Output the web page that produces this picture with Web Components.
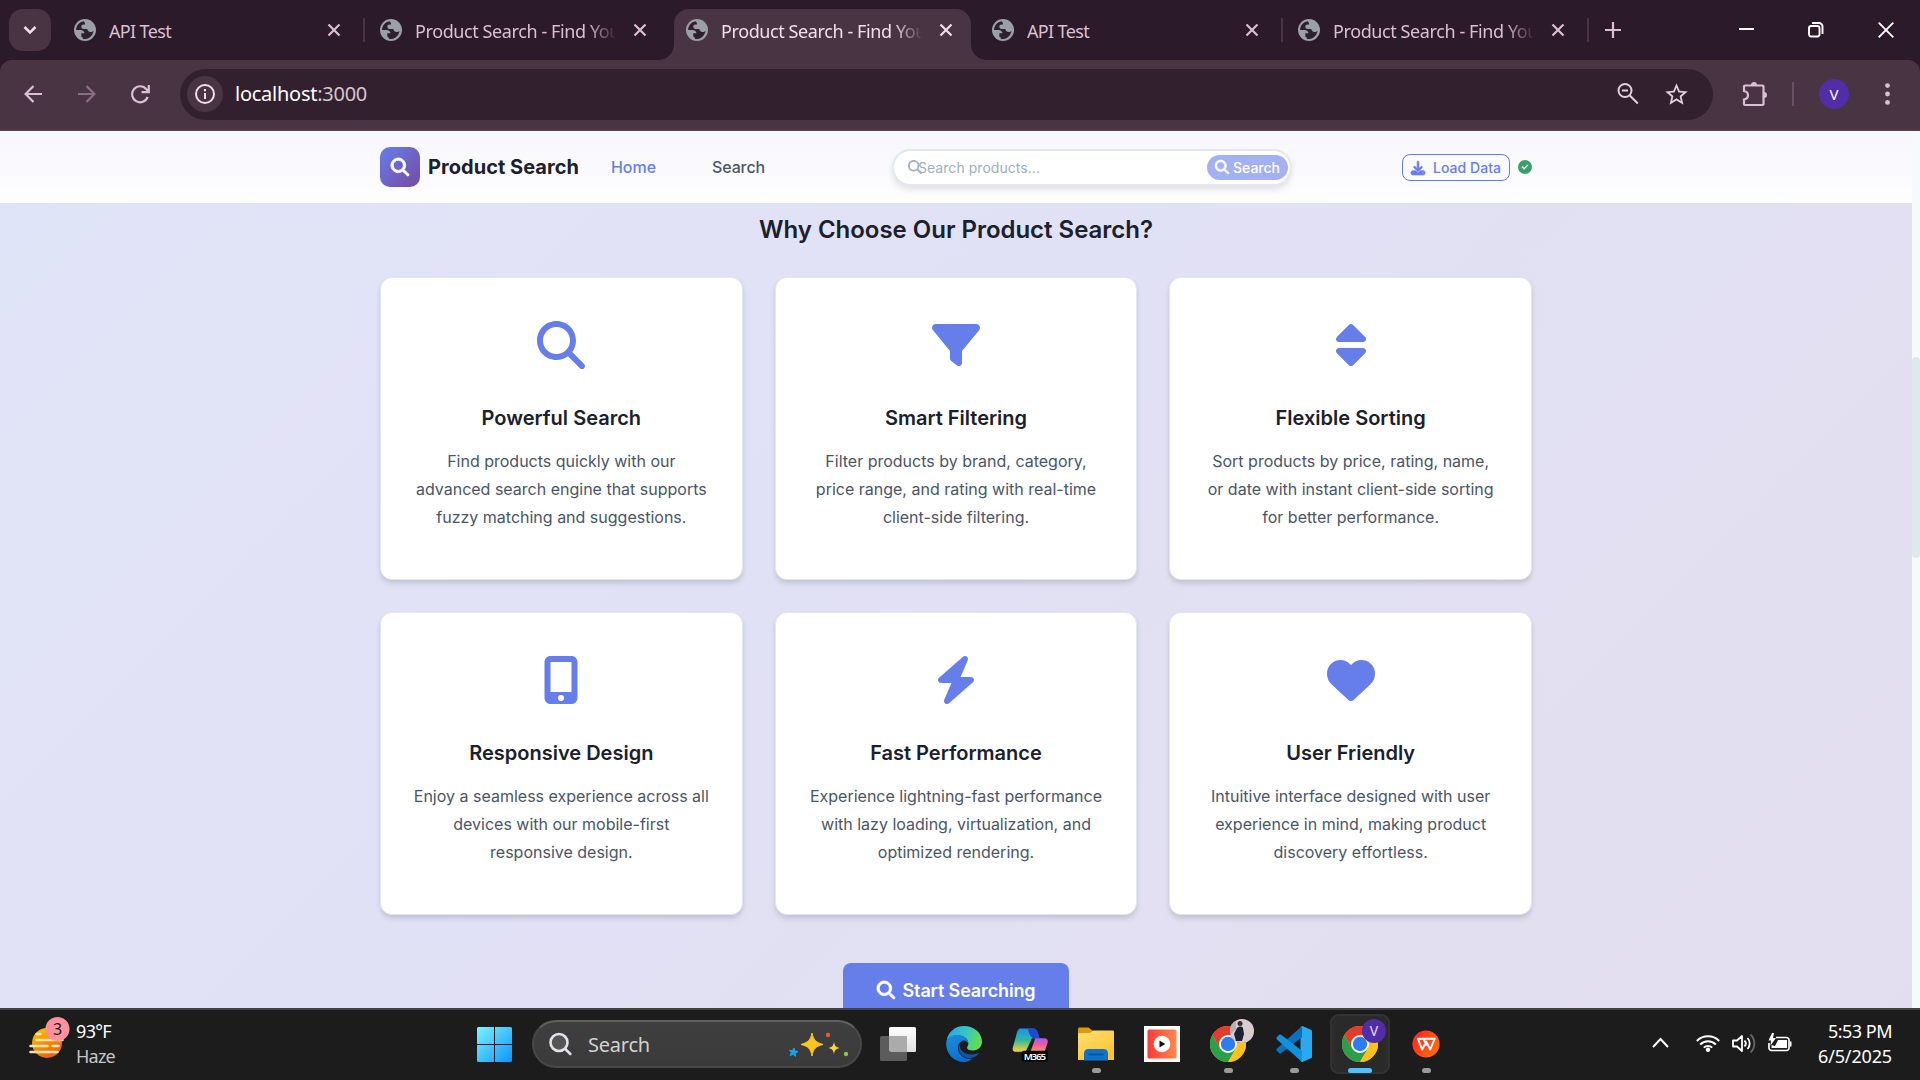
<!DOCTYPE html>
<html lang="en">
<head>
<meta charset="utf-8">
<title>Product Search</title>
<style>
html,body{margin:0;width:1920px;height:1080px;overflow:hidden;background:#1c1c1c}
body{font-family:Inter,"Liberation Sans",sans-serif}
</style>
</head>
<body>
<desktop-screen></desktop-screen>
<script>
const UI = '"Noto Sans","Open Sans",sans-serif';
const define = (name, html, after) => {
  const tpl = document.createElement('template');
  customElements.define(name, class extends HTMLElement {
    constructor() {
      super();
      tpl.innerHTML = typeof html === 'function' ? html(this) : html;
      this.attachShadow({ mode: 'open' }).appendChild(tpl.content.cloneNode(true));
    }
    connectedCallback() { if (after) after(this); }
  });
};

/* Text set to an exact advance width by adjusting its tracking. */
define('fit-text', '<style>:host{display:inline-block;white-space:nowrap}span{display:inline-block}</style><span><slot></slot></span>', el => {
  const span = el.shadowRoot.querySelector('span');
  const n = el.textContent.length, w = +el.getAttribute('w');
  const d = (w - span.getBoundingClientRect().width) / n;
  span.style.letterSpacing = d.toFixed(3) + 'px';
});

const FA = {
  search: [512, 'M416 208c0 45.9-14.9 88.3-40 122.7L502.6 457.4c12.5 12.5 12.5 32.8 0 45.3s-32.8 12.5-45.3 0L330.7 376c-34.4 25.2-76.8 40-122.7 40C93.1 416 0 322.9 0 208S93.1 0 208 0S416 93.1 416 208zM208 352a144 144 0 1 0 0-288 144 144 0 1 0 0 288z'],
  filter: [512, 'M3.9 54.9C10.5 40.9 24.5 32 40 32H472c15.5 0 29.5 8.9 36.1 22.9s4.6 30.5-5.2 42.5L320 320.9V448c0 12.1-6.8 23.2-17.7 28.6s-23.8 4.3-33.5-3l-64-48c-8.1-6-12.8-15.5-12.8-25.6V320.9L9 97.3C-.7 85.4-2.8 68.8 3.9 54.9z'],
  sort: [320, 'M137.4 41.4c12.5-12.5 32.8-12.5 45.3 0l128 128c9.2 9.2 11.9 22.9 6.9 34.9s-16.6 19.8-29.6 19.8H32c-12.9 0-24.6-7.8-29.6-19.8s-2.2-25.7 6.9-34.9l128-128zm0 429.3l-128-128c-9.2-9.2-11.9-22.9-6.9-34.9s16.6-19.8 29.6-19.8H288c12.9 0 24.6 7.8 29.6 19.8s2.2 25.7-6.9 34.9l-128 128c-12.5 12.5-32.8 12.5-45.3 0z'],
  mobile: [384, 'M16 64C16 28.7 44.7 0 80 0H304c35.3 0 64 28.7 64 64V448c0 35.3-28.7 64-64 64H80c-35.3 0-64-28.7-64-64V64zM224 448a32 32 0 1 0-64 0 32 32 0 1 0 64 0zM304 64H80V384H304V64z'],
  bolt: [448, 'M349.4 44.6c5.9-13.7 1.5-29.7-10.6-38.5s-28.6-8-39.9 1.8l-256 224c-10 8.8-13.6 22.9-8.9 35.3S50.7 288 64 288H175.5L98.6 467.4c-5.9 13.7-1.5 29.7 10.6 38.5s28.6 8 39.9-1.8l256-224c10-8.8 13.6-22.9 8.9-35.3s-16.6-20.7-30-20.7H272.5L349.4 44.6z'],
  heart: [512, 'M47.6 300.4L228.3 469.1c7.5 7 17.4 10.9 27.7 10.9s20.2-3.9 27.7-10.9L464.4 300.4c30.4-28.3 47.6-68 47.6-109.5v-5.8c0-69.9-50.5-129.5-119.4-141C347 36.5 300.6 51.4 268 84L256 96 244 84c-32.6-32.6-79-47.5-124.6-39.9C50.5 55.6 0 115.2 0 185.1v5.8c0 41.5 17.2 81.2 47.6 109.5z'],
  download: [512, 'M288 32c0-17.7-14.3-32-32-32s-32 14.3-32 32V274.7l-73.4-73.4c-12.5-12.5-32.8-12.5-45.3 0s-12.5 32.8 0 45.3l128 128c12.5 12.5 32.8 12.5 45.3 0l128-128c12.5-12.5 12.5-32.8 0-45.3s-32.8-12.5-45.3 0L288 274.7V32zM64 352c-35.3 0-64 28.7-64 64v32c0 35.3 28.7 64 64 64H448c35.3 0 64-28.7 64-64V416c0-35.3-28.7-64-64-64H346.5l-45.3 45.3c-25 25-65.5 25-90.5 0L165.5 352H64zm368 56a24 24 0 1 1 0 48 24 24 0 1 1 0-48z'],
  check: [512, 'M256 512A256 256 0 1 0 256 0a256 256 0 1 0 0 512zM369 209L241 337c-9.4 9.4-24.6 9.4-33.9 0l-64-64c-9.4-9.4-9.4-24.6 0-33.9s24.6-9.4 33.9 0l47 47L335 175c9.4-9.4 24.6-9.4 33.9 0s9.4 24.6 0 33.9z']
};
define('fa-icon', '<style>:host{display:block;flex:none}svg{display:block;margin:auto;overflow:visible}:host([bold]) path{stroke:currentColor;stroke-width:24px}</style><svg fill="currentColor"><path/></svg>', el => {
  const [w, d] = FA[el.getAttribute('name')], s = +el.getAttribute('size');
  const svg = el.shadowRoot.querySelector('svg');
  svg.setAttribute('viewBox', `0 0 ${w} 512`);
  svg.setAttribute('height', s);
  svg.setAttribute('width', s * w / 512);
  svg.firstChild.setAttribute('d', d);
});

/* ---------- browser chrome ---------- */
define('browser-tab', `<style>
:host{display:flex;align-items:center;box-sizing:border-box;width:306px;height:51px;margin-top:9px;padding:0 0 9px 12px;color:#dcbfd3;position:relative;font:400 18px ${UI};flex:none}
:host([active]){background:#493443;border-radius:15px 15px 0 0;width:297px;margin-right:9px;color:#f0dfea}
:host([active])::before,:host([active])::after{content:"";position:absolute;bottom:0;width:15px;height:15px}
:host([active])::before{left:-15px;background:radial-gradient(circle at 0 0,transparent 14.5px,#493443 15px)}
:host([active])::after{right:-15px;background:radial-gradient(circle at 100% 0,transparent 14.5px,#493443 15px)}
.globe{width:22px;height:22px;flex:none}
.t{margin-left:13px;width:200px;overflow:hidden;white-space:nowrap;line-height:26px;padding-top:2px}
:host([long]) .t{-webkit-mask-image:linear-gradient(90deg,#000 172px,transparent 202px)}
.x{margin-left:18px;width:14px;height:14px;flex:none}
i{position:absolute;left:301px;top:9px;width:2px;height:24px;background:#493443}
:host(:not([sep])) i{display:none}
</style>
<svg class="globe" viewBox="0 0 22 22"><circle cx="11" cy="11" r="11" fill="#9aa0a6"/><path d="M9.6 2.2C5.2 2.9 2.1 6.7 2.1 11h4.6c2 0 3.6 1.4 3.8 3.2H7.300v2.500c0 1 .6 1.700 1.500 1.800v1.200c4 .9 7.700-1 9.500-4.300.8-1.400 1.100-2.600 1.100-3.600-1 1.300-2.600 1.500-4 .9-1.300-.6-2-1.600-2.100-2.800H9.500c-1.300 0-2.200-.9-2.200-2.100 0-1.300 1-2.200 2.300-2.200h1.500c0-1.300-.4-2.600-1.500-3.400z" fill="#2f2030"/></svg>
<div class="t"><slot></slot></div>
<svg class="x" viewBox="0 0 14 14" stroke="currentColor" stroke-width="2.200"><path d="M1.500 1.500l11 11M12.500 1.500l-11 11"/></svg><i></i>`);

define('browser-chrome', `<style>
:host{display:flex;flex-direction:column;height:131px;background:#2b1a29;color:#dcbfd3}
.strip{display:flex;height:60px}
.drop{width:42px;height:42px;margin:9px 11px 0 9px;border-radius:14px;background:#493443;display:flex;align-items:center;justify-content:center}
.plus{margin:22px 0 0 13px;width:16px;height:16px}
.win{display:flex;gap:54px;margin-left:auto;padding:22px 26px 0 0}
.bar{display:flex;align-items:center;height:69px;background:#493443;border-radius:12px 12px 0 0;padding:0 26px 1px 24px;box-sizing:border-box;border-bottom:0}
.line{height:2px;background:#51404b}
.bar>svg{flex:none}
.omni{display:flex;align-items:center;box-sizing:border-box;width:1533px;height:51px;margin-left:29px;border-radius:26px;background:#33202f;padding:0 23px 0 7px;flex:none}
.info{width:36px;height:36px;border-radius:50%;background:#493443;display:flex;align-items:center;justify-content:center;color:#f0dfea}
.url{margin-left:12px;font:400 20px/28px ${UI};color:#d6c5cf}
.url b{font-weight:400;color:#fff}
.sep{width:2px;height:24px;background:#6b5063;margin:0 25px}
.av{width:30px;height:30px;border-radius:50%;background:#512da8;color:#fff;font:400 15px/30px ${UI};text-align:center;margin-right:36px}
</style>
<div class="strip">
 <div class="drop"><svg width="14" height="10" viewBox="0 0 14 10" fill="none" stroke="#f0dfea" stroke-width="2.500"><path d="M1.500 2l5.500 5.500L12.500 2"/></svg></div>
 <browser-tab sep><fit-text w="62">API Test</fit-text></browser-tab>
 <browser-tab long><fit-text w="212">Product Search - Find Your</fit-text></browser-tab>
 <browser-tab long active><fit-text w="212">Product Search - Find Your</fit-text></browser-tab>
 <browser-tab sep><fit-text w="62">API Test</fit-text></browser-tab>
 <browser-tab long sep><fit-text w="212">Product Search - Find Your</fit-text></browser-tab>
 <svg class="plus" viewBox="0 0 16 16" stroke="currentColor" stroke-width="2.200"><path d="M8 0v16M0 8h16"/></svg>
 <div class="win">
  <svg width="15" height="16" viewBox="0 0 15 16"><path d="M0 7h15" stroke="#fff" stroke-width="2"/></svg>
  <svg width="16" height="16" viewBox="0 0 16 16" fill="none" stroke="#fff" stroke-width="1.900"><rect x="1" y="4" width="10.500" height="10.500" rx="2.200"/><path d="M4 1h7a3.500 3.500 0 0 1 3.500 3.500V12"/></svg>
  <svg width="16" height="16" viewBox="0 0 16 16" stroke="#fff" stroke-width="1.900"><path d="M.7.7l14.600 14.600M15.300.7L.7 15.300"/></svg>
 </div>
</div>
<div class="bar">
 <svg width="18" height="18" viewBox="0 0 18 18" fill="none" stroke="currentColor" stroke-width="2.200"><path d="M18 9H2M9.500 1L1.600 9l7.900 8"/></svg>
 <svg style="margin-left:36px" width="18" height="18" viewBox="0 0 18 18" fill="none" stroke="#8a6f82" stroke-width="2.200"><path d="M0 9h16M8.500 1l7.900 8-7.900 8"/></svg>
 <svg style="margin-left:35px" width="19" height="19" viewBox="0 0 19 19" fill="none" stroke="currentColor" stroke-width="2.200"><path d="M16.700 12a8 8 0 1 1-1.300-7.800L17.500 7M17.800 0v7.200h-7.300"/></svg>
 <div class="omni" style="margin-left:30px">
  <div class="info"><svg width="20" height="20" viewBox="0 0 20 20" fill="none" stroke="currentColor" stroke-width="2"><circle cx="10" cy="10" r="9"/><path d="M10 9v6M10 5v2.200"/></svg></div>
  <div class="url"><fit-text w="132"><b>localhost</b>:3000</fit-text></div>
  <svg style="margin-left:auto" width="22" height="22" viewBox="0 0 22 22" fill="none" stroke="#e2cfdc" stroke-width="2"><circle cx="8" cy="7.500" r="6.500"/><path d="M12.800 12.500l8 8M5 7.500h6"/></svg>
  <svg style="margin-left:24px" width="27" height="27" viewBox="0 0 24 24" fill="#e2cfdc"><path d="M22 9.240l-7.190-.62L12 2 9.190 8.630 2 9.240l5.460 4.730L5.820 21 12 17.270 18.180 21l-1.630-7.030L22 9.240zM12 15.400l-3.760 2.270 1-4.280-3.320-2.880 4.380-.38L12 6.100l1.710 4.040 4.380.38-3.320 2.880 1 4.280L12 15.400z"/></svg>
 </div>
 <svg style="margin-left:29px" width="25" height="26" viewBox="0 0 25 26" fill="none" stroke="currentColor" stroke-width="2.200"><path d="M3 4.500h17.500a1 1 0 0 1 1 1V23a1 1 0 0 1-1 1H3a1 1 0 0 1-1-1v-4.500c2.500-.5 4-2 4-4.300s-1.500-3.800-4-4.200V5.500a1 1 0 0 1 1-1z"/><path d="M9 4a3 3 0 0 1 6 0zM22 11a3 3 0 0 1 0 6z" fill="currentColor" stroke="none"/></svg>
 <div class="sep"></div><div class="av">V</div>
 <svg width="5" height="22" viewBox="0 0 5 22" fill="currentColor"><circle cx="2.500" cy="2.600" r="2.400"/><circle cx="2.500" cy="11" r="2.400"/><circle cx="2.500" cy="19.400" r="2.400"/></svg>
</div><div class="line"></div>`);

/* ---------- site ---------- */
define('site-nav', `<style>
:host{display:flex;align-items:center;box-sizing:border-box;height:72px;width:1912px;padding:0 380px;background:linear-gradient(#f6f6fd,#fefeff);color:#4a5568}
.logo{width:40px;height:40px;border-radius:10px;background:linear-gradient(135deg,#667eea,#764ba2);color:#fff;display:flex;align-items:center;justify-content:center;flex:none}
.brand{font-weight:700;font-size:20px;color:#1a202c;margin-left:8px;width:183px}
.a{font-weight:500;font-size:16px;color:#667eea;width:101px}
.a+.a{color:#4a5568;width:180px}
.box{box-sizing:border-box;width:400px;height:37px;border:2px solid #e2e8f0;border-radius:19px;background:#fff;display:flex;align-items:center;padding:0 2px 0 14px;box-shadow:0 4px 6px rgba(0,0,0,.1);color:#a0aec0;font-size:14px}
.ph{margin-left:-4px}
.btn{margin-left:auto;width:81px;height:25px;border-radius:13px;background:#a3b1f3;color:#fff;font-weight:500;display:flex;align-items:center;justify-content:center;gap:4px}
.load{box-sizing:border-box;margin-left:110px;width:108px;height:27px;border:1px solid #667eea;border-radius:8px;color:#667eea;font-weight:500;font-size:14px;display:flex;align-items:center;justify-content:center;gap:8px;flex:none;margin-top:1px}
</style>
<div class="logo"><fa-icon bold name="search" size="18"></fa-icon></div>
<div class="brand"><fit-text w="151">Product Search</fit-text></div>
<div class="a"><fit-text w="45">Home</fit-text></div><div class="a"><fit-text w="53">Search</fit-text></div>
<div class="box"><fa-icon name="search" size="14"></fa-icon><div class="ph"><fit-text w="122">Search products...</fit-text></div>
<div class="btn"><fa-icon bold name="search" size="14"></fa-icon><fit-text w="47">Search</fit-text></div></div>
<div class="load"><fa-icon bold name="download" size="14"></fa-icon><fit-text w="68">Load Data</fit-text></div>
<fa-icon name="check" size="14" style="color:#38a169;margin-left:8px"></fa-icon>`);

define('feature-card', el => `<style>
:host{display:block;box-sizing:border-box;height:303px;background:#fff;border:1px solid #e2e8f0;border-radius:12px;padding:43px 30px 0;text-align:center;box-shadow:0 4px 6px -1px rgba(0,0,0,.13),0 2px 4px rgba(0,0,0,.04)}
fa-icon{color:#667eea}
h3{margin:35px 0 0;font:600 20px/28px Inter,sans-serif;color:#1a202c}
p{margin:15px 0 0;font:400 16px/28px Inter,sans-serif;color:#4a5568;white-space:nowrap}
</style><fa-icon name="${el.getAttribute('icon')}" size="48"></fa-icon><h3><slot name="title"></slot></h3><p><slot></slot></p>`);

define('site-page', `<style>
:host{display:flex;width:1920px;height:877px;overflow:hidden;font-family:Inter,sans-serif}
.doc{width:1912px;background:linear-gradient(135deg,#e0e4f7 0%,#e1e2f6 25%,#e1e1f5 45%,#e2e0f2 70%,#e2def0 100%)}
.rail{width:8px;background:#f7fafc}
.thumb{height:201px;margin-top:226px;background:#e0e8ef;border-radius:4px}
h2{margin:9px 0 0;text-align:center;font:600 24px/36px Inter,sans-serif;color:#1a202c}
.grid{display:grid;grid-template-columns:repeat(3,1fr);gap:32px;width:1152px;margin:29px auto 0}
.cta{width:226px;height:60px;margin:48px auto 0;background:#667eea;border-radius:8px;color:#fff;font-weight:600;font-size:18px;display:flex;justify-content:center;gap:8px;padding-top:18px;box-sizing:border-box;line-height:20px}
</style>
<div class="doc"><site-nav></site-nav>
<h2><fit-text w="394">Why Choose Our Product Search?</fit-text></h2>
<div class="grid">
<feature-card icon="search"><span slot="title">Powerful Search</span>Find products quickly with our<br>advanced search engine that supports<br>fuzzy matching and suggestions.</feature-card>
<feature-card icon="filter"><span slot="title">Smart Filtering</span>Filter products by brand, category,<br>price range, and rating with real-time<br>client-side filtering.</feature-card>
<feature-card icon="sort"><span slot="title">Flexible Sorting</span>Sort products by price, rating, name,<br>or date with instant client-side sorting<br>for better performance.</feature-card>
<feature-card icon="mobile"><span slot="title">Responsive Design</span>Enjoy a seamless experience across all<br>devices with our mobile-first<br>responsive design.</feature-card>
<feature-card icon="bolt"><span slot="title">Fast Performance</span>Experience lightning-fast performance<br>with lazy loading, virtualization, and<br>optimized rendering.</feature-card>
<feature-card icon="heart"><span slot="title">User Friendly</span>Intuitive interface designed with user<br>experience in mind, making product<br>discovery effortless.</feature-card>
</div>
<div class="cta"><fa-icon bold name="search" size="18"></fa-icon><fit-text w="133">Start Searching</fit-text></div>
</div><div class="rail"><div class="thumb"></div></div>`);

/* ---------- taskbar ---------- */
define('task-app', `<style>
:host{display:flex;width:60px;height:60px;margin:4px 3px 0;border-radius:9px;align-items:center;justify-content:center;position:relative;flex:none;box-sizing:border-box}
:host([active]){background:#2a2a2a;box-shadow:inset 0 0 0 2px #333}
i{position:absolute;left:25.500px;bottom:1px;width:9px;height:5px;border-radius:3px;background:#9a9a9a;display:none}
:host([open]) i{display:block}
:host([active]) i{display:block;width:24px;left:18px;background:#4cc2ff}
</style><slot></slot><i></i>`);

define('chrome-logo', `<style>:host{display:block}svg{display:block}</style>
<svg width="36" height="36" viewBox="-18 -18 36 36"><circle r="18" fill="#fbbc05"/>
<path d="M-15.590 -9A18 18 0 0 1 15.590 -9L0 -9L-7.800 4.500z" fill="#e33b2e"/>
<path d="M-15.590 -9A18 18 0 0 0 0 18L7.800 4.500H-7.800z" fill="#2b9f49"/>
<path d="M15.590 -9A18 18 0 0 1 0 18L7.800 4.500L0 -9z" fill="#fcc21b"/>
<circle r="9" fill="#fff"/><circle r="7.200" fill="#2f7bf0"/></svg>`);

define('app-badge', `<style>:host{position:absolute;left:32px;top:5px;width:24px;height:24px;border-radius:50%;background:#512da8;color:#e8def8;font:400 14px/24px ${UI};text-align:center;overflow:hidden}</style><slot></slot>`);

define('task-bar', `<style>
:host{display:flex;box-sizing:border-box;height:72px;border-top:2px solid #434343;background:#1c1c1c;font:400 18px/25px ${UI};color:#fff;width:1920px}
.wx{display:flex;width:461px;padding-left:29px;box-sizing:border-box;padding-top:7px}
.wx svg{flex:none;margin-right:6px}
.col{padding-top:2px}
.col div{height:25px}
.search{box-sizing:border-box;width:330px;height:48px;margin:10px 3px 0 5px;border-radius:24px;background:linear-gradient(#3f3f3f,#3a3a3a);border:2px solid #484848;border-top-color:#606060;display:flex;align-items:center;padding-left:15px;font-size:20px;color:#d2d2d2}
.search div{margin-left:15px}
.search .sp{margin-left:135px}
.tray{display:flex;margin-left:auto;padding-right:28px}
.tray>svg{margin-top:23px}
.clock{text-align:right;padding-top:9px;margin-left:26px}
.clock div{height:25px}
</style>
<div class="wx"><svg width="41" height="44" viewBox="0 0 41 44"><defs><linearGradient id="s" x1="0" y1="0" x2=".6" y2="1"><stop offset="0" stop-color="#ffc800"/><stop offset="1" stop-color="#e8620c"/></linearGradient></defs>
<circle cx="18" cy="26" r="15" fill="url(#s)"/><g stroke="#f6e2b0" stroke-width="2.600" stroke-linecap="round"><path d="M7.500 17h4M7.500 23h26M1.500 29h17M23.500 29h6M1.500 35h27"/></g><circle cx="28.500" cy="12" r="12" fill="#ff919d"/><text x="28.500" y="17.500" text-anchor="middle" font-family="Noto Sans" font-size="16" fill="#1c1c1c">3</text></svg>
<div class="col"><div><fit-text w="35">93°F</fit-text></div><div style="color:#c4c4c4"><fit-text w="39">Haze</fit-text></div></div></div>
<task-app><svg width="35" height="35" viewBox="0 0 35 35"><defs><linearGradient id="w" x1="0" y1="0" x2="1" y2="1" gradientUnits="objectBoundingBox"><stop offset="0" stop-color="#7df3ff"/><stop offset="1" stop-color="#0a94ff"/></linearGradient><mask id="wm"><path fill="#fff" d="M1 0h16v17H0V1zM18 0h16l1 1v16H18zM0 18h17v17H1l-1-1zM18 18h17v16l-1 1H18z"/></mask></defs><rect width="35" height="35" fill="url(#w)" mask="url(#wm)"/></svg></task-app>
<div class="search"><svg width="24" height="24" viewBox="0 0 24 24" fill="#555" stroke="#e4e4e8" stroke-width="2.600" stroke-linecap="round"><circle cx="10" cy="10.500" r="8.500"/><path d="M16.300 17l5 5"/></svg><div><fit-text w="62">Search</fit-text></div>
<svg class="sp" width="66" height="30" viewBox="0 0 66 30"><path d="M27 4c1.500 7 3.500 9 11 11.500-7.500 2-9.500 4-11 11.500-1.500-7.500-3.500-9.500-11-11.500C23.500 13 25.500 11 27 4z" fill="#fcc41c" stroke="#fcc41c"/><path d="M49 13c.9 4 1.800 5 5.500 6-3.700 1-4.600 2-5.500 6-.9-4-1.800-5-5.500-6 3.700-1 4.600-2 5.500-6z" fill="#fdd43a"/><path d="M9 19l1 3 3 .6-2.700 1.600.2 3.200-2.300-2-3.200 1.100 1.300-2.800-1.800-2.400 3 .3z" fill="#0ea5f0" stroke="#0ea5f0"/><circle cx="43" cy="6" r="2.200" fill="#f0592a"/><circle cx="61" cy="25" r="2.200" fill="#8cc63f"/></svg></div>
<task-app><svg width="36" height="34" viewBox="0 0 36 34"><defs><linearGradient id="tv" x2="0" y2="1"><stop stop-color="#fff"/><stop offset="1" stop-color="#e0e0e0"/></linearGradient></defs><rect x="9" width="27" height="25" rx="1.500" fill="url(#tv)"/><rect y="9" width="27" height="25" rx="1.500" fill="#5c5c5c"/><path d="M9 9h18v16H10.500L9 23.500z" fill="#ababab"/></svg></task-app>
<task-app><svg width="36" height="36" viewBox="0 0 36 36"><defs><linearGradient id="e1" x1="0" y1=".2" x2="1" y2=".5"><stop stop-color="#2aa5e8"/><stop offset=".5" stop-color="#35c4c4"/><stop offset="1" stop-color="#6bdc4a"/></linearGradient><linearGradient id="e2" x1="0" y1="0" x2=".5" y2="1"><stop stop-color="#1b8fdc"/><stop offset="1" stop-color="#0a6fd0"/></linearGradient></defs>
<path d="M.5 15C2 6 9 0 18 0c10 0 18 7 18 15.500 0 5.500-4 9-9 9-4 0-6-1.300-6-2.700 0-1 1.300-1.600 1.300-4.300C22.300 13 18.500 10 13 9.500 7 9 2.500 11 .5 15z" fill="url(#e1)"/>
<path d="M.5 15C2 11 6.500 8.500 12 9c6 .5 10.300 4 10.300 8.500-1-2-3-3.200-5-3-5 1-8 9-2 15 3 3 7 4 11 3C24 35 21 36 18 36 7 36-1.500 26 .5 15z" fill="url(#e2)"/>
<path d="M13.500 18c-3 6 1.500 13 8 14 5 .8 9.500-2 12-5.500-1 .2-4 2-8 2-7 0-12-4-12-10.500z" fill="#1353a0"/></svg></task-app>
<task-app><svg width="36" height="36" viewBox="0 0 37 36"><defs><linearGradient id="m1" x2="0" y2="1"><stop stop-color="#1d8ff0"/><stop offset=".5" stop-color="#2fb8a0"/><stop offset="1" stop-color="#ffd22e"/></linearGradient><linearGradient id="m2" x2="0" y2="1"><stop stop-color="#a45cf0"/><stop offset=".5" stop-color="#f05a9c"/><stop offset="1" stop-color="#ff9a60"/></linearGradient></defs>
<path d="M9 2h12c4 0 4 2 5 5l1.500 5h-7L15 24c-1 2-2 2-4 2H4c-3 0-4-2-3-5L5.500 5C6.300 3 7 2 9 2z" fill="url(#m1)"/><path d="M16 2h6c3 0 4 2 5 5l1.500 5H22c-3-1-4-4-6-10z" fill="#1c4bd0"/><path d="M24 12h9c3 0 4.500 2 3.500 5l-3 9H19z" fill="url(#m2)"/><rect x="10" y="25" width="27" height="11" rx="2" fill="#050505"/><text x="23.500" y="34" text-anchor="middle" textLength="23" font-family="Noto Sans" font-weight="600" font-size="10" fill="#fff">M365</text></svg></task-app>
<task-app open><svg width="36" height="34" viewBox="0 0 36 34"><defs><linearGradient id="f" x2=".7" y2="1"><stop stop-color="#ffdf77"/><stop offset="1" stop-color="#ffc32b"/></linearGradient></defs><path d="M0 2.500C0 1 .6.500 2 .5h8.500L15 4h20l1 1v8H0z" fill="#dd9b06"/><path d="M0 7.500C0 6.500.6 6 1.600 6H12l3-2.500h19.500c1 0 1.500.6 1.500 1.500v28H0z" fill="url(#f)"/><path d="M6 33.500v-7c0-3 1.500-4.500 4.500-4.500h15c3 0 4.500 1.500 4.500 4.500v7z" fill="#0f72c8"/><path d="M10.500 27.500h15" stroke="#0a4c96" stroke-width="1.500"/></svg></task-app>
<task-app><svg width="36" height="36" viewBox="0 0 36 36"><defs><linearGradient id="v"><stop stop-color="#fb3a3a"/><stop offset="1" stop-color="#ff8a48"/></linearGradient></defs><rect width="36" height="36" fill="#fff"/><rect x="3.500" y="3.500" width="29" height="29" rx="1.500" fill="url(#v)"/><circle cx="18" cy="18" r="8.300" fill="#fff"/><path d="M15.500 14.500v7l5.800-3.500z" fill="#111"/></svg></task-app>
<task-app open><chrome-logo></chrome-logo><app-badge><svg style="display:block" width="24" height="24" viewBox="0 0 24 24"><rect width="24" height="24" fill="#d9cdcf"/><path d="M0 0h6v10L0 16z" fill="#b9aeb0"/><path d="M7 9c2-2 5-2 6 0l1 6-2 7H6L4 15z" fill="#1d222c"/><circle cx="10" cy="4.500" r="2.500" fill="#3a2c28"/></svg></app-badge></task-app>
<task-app open><svg width="36" height="36" viewBox="0 0 36 36"><path d="M26 0l9 4q1 .5 1 1.500v25q0 1-1 1.500l-9 4-1.500-1V1z" fill="#2aa8f2"/><path d="M26 0L1 22.500q-1.200 1.200 0 2.500L3 27q1.200 1 2.500 0L26 11.300z" fill="#0a71bd"/><path d="M26 36L1 13.500q-1.200-1.200 0-2.500L3 9q1.200-1 2.500 0L26 24.700z" fill="#1391dc"/><path d="M26 0v36l9-4q1-.5 1-1.500v-25q0-1-1-1.500z" fill="#2aa8f2"/></svg></task-app>
<task-app active><chrome-logo></chrome-logo><app-badge>V</app-badge></task-app>
<task-app open><svg width="28" height="28" viewBox="0 0 28 28"><defs><linearGradient id="p" x2="1" y2=".6"><stop stop-color="#ff1f1f"/><stop offset="1" stop-color="#ff6a10"/></linearGradient></defs><circle cx="14" cy="14" r="13.600" fill="url(#p)"/><path d="M8 8.700H5.800l4.400 10.800 4-8 4 8 4.600-10.800H11M8 8.700h3.500l3 6.800" fill="none" stroke="#fff" stroke-width="1.900" stroke-linejoin="round"/></svg></task-app>
<div class="tray">
<svg width="17" height="20" viewBox="0 0 17 20" fill="none" stroke="#fff" stroke-width="2"><path d="M1 14l7.500-8 7.500 8"/></svg>
<svg style="margin-left:27px" width="24" height="20" viewBox="0 0 24 20" fill="none" stroke="#fff" stroke-width="2"><path d="M.8 8a15.800 15.800 0 0 1 22.400 0M4.200 11.500a11 11 0 0 1 15.600 0M7.800 14.600a6 6 0 0 1 8.400 0"/><circle cx="12" cy="16.800" r="2.200" fill="#fff" stroke="none"/></svg>
<svg style="margin-left:12px" width="24" height="20" viewBox="0 0 24 20" fill="none" stroke="#fff" stroke-width="1.800"><path d="M1 7.500h4L10 3v15l-5-4.500H1z" stroke-linejoin="round"/><path d="M12.500 7.500a4.500 4.500 0 0 1 0 6M15.500 5a8 8 0 0 1 0 11"/><path d="M18.500 1.500a12.500 12.500 0 0 1 0 18" stroke="#666"/></svg>
<svg style="margin-left:12px" width="24" height="22" viewBox="0 0 24 22"><path d="M8 4.500h10.500a2.500 2.500 0 0 1 2.500 2.500v8a2.500 2.500 0 0 1-2.500 2.500h-15A2.500 2.500 0 0 1 1 15v-5" fill="none" stroke="#fff" stroke-width="1.700"/><path d="M10 7h7.500v0H19v8H3.500v-3L7 13z" fill="#fff"/><path d="M22 8.500h1.500v5H22zM4 0L.5 7.500H3L2.500 12.500 8 5H5l1-5z" fill="#fff"/></svg>
<div class="clock"><div><fit-text w="64">5:53 PM</fit-text></div><div><fit-text w="74">6/5/2025</fit-text></div></div>
</div>`);

define('desktop-screen', `<style>:host{display:flex;flex-direction:column;width:1920px;height:1080px;overflow:hidden}</style><browser-chrome></browser-chrome><site-page></site-page><task-bar></task-bar>`);
</script>
</body>
</html>
